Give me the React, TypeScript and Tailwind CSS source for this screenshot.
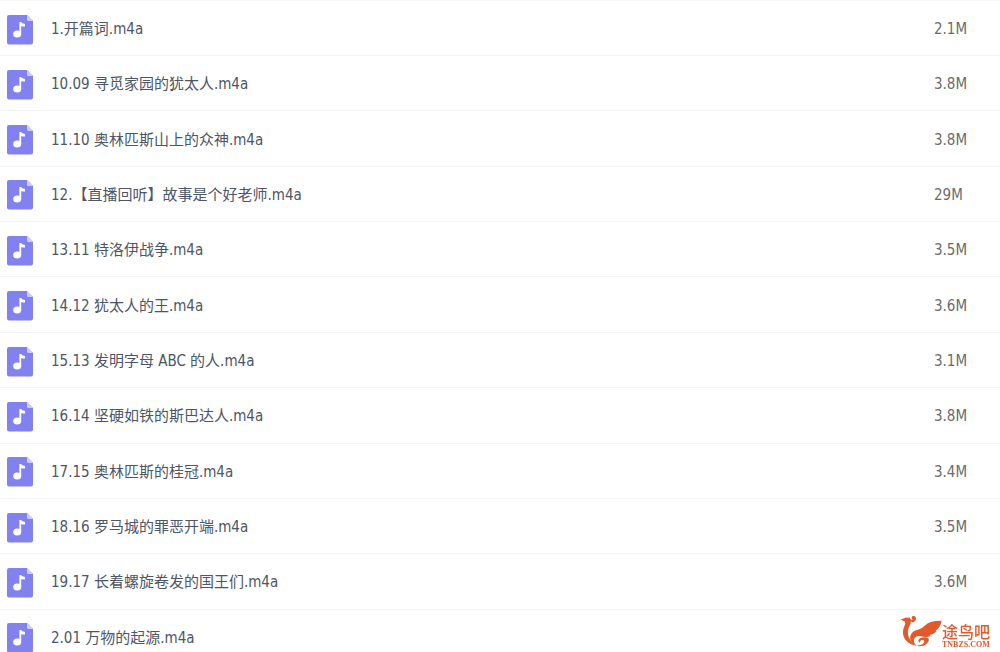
interface AudioFile {
  name: string;
  size?: string;
}

const files: AudioFile[] = [
  { name: "1.开篇词.m4a", size: "2.1M" },
  { name: "10.09 寻觅家园的犹太人.m4a", size: "3.8M" },
  { name: "11.10 奥林匹斯山上的众神.m4a", size: "3.8M" },
  { name: "12.【直播回听】故事是个好老师.m4a", size: "29M" },
  { name: "13.11 特洛伊战争.m4a", size: "3.5M" },
  { name: "14.12 犹太人的王.m4a", size: "3.6M" },
  { name: "15.13 发明字母 ABC 的人.m4a", size: "3.1M" },
  { name: "16.14 坚硬如铁的斯巴达人.m4a", size: "3.8M" },
  { name: "17.15 奥林匹斯的桂冠.m4a", size: "3.4M" },
  { name: "18.16 罗马城的罪恶开端.m4a", size: "3.5M" },
  { name: "19.17 长着螺旋卷发的国王们.m4a", size: "3.6M" },
  { name: "2.01 万物的起源.m4a" },
];

function AudioIcon() {
  return (
    <svg viewBox="0 0 26 30" className="block h-[30px] w-[26px]" aria-hidden="true">
      <path d="M2 0H20L26 6V27.500Q26 29.500 24 29.500H2Q0 29.500 0 27.500V2Q0 0 2 0Z" fill="#8181f0" />
      <path d="M20 0L26 6H21.5Q20 6 20 4.5Z" fill="#cfcefb" />
      <ellipse cx="10.2" cy="19" rx="4" ry="3.5" fill="#fff" />
      <path d="M12.400 7H14Q14.800 8.800 18 8.900V11.600Q15.500 11.700 14.200 11V19H12.400Z" fill="#fff" />
    </svg>
  );
}

function SiteLogo() {
  return (
    <div className="fixed right-[10px] bottom-0 flex items-center text-[#e2592b]">
      <svg viewBox="0 0 129 114" className="h-[38px] w-[43px]" fill="currentColor" aria-hidden="true">
        {/* head and body */}
        <path d="M5 15Q12 16 17 12Q25 8 31 13Q39 20 33 33Q24 49 28 65Q33 84 54 95Q31 94 18 76Q7 59 15 39Q22 25 16 22Q9 21 5 15Z" />
        {/* crest */}
        <path d="M31 9Q34 19 41 18Q35 9 42 5Q50 5 51 13Q50 24 41 25Q34 24 29 14Z" />
        {/* wing */}
        <path d="M128 20Q124 41 109 50L113 51Q105 62 91 63L95 66Q81 72 66 67Q53 64 47 72Q41 80 50 94Q30 84 34 66Q39 50 57 47Q68 45 77 35Q92 19 128 20Z" />
        {/* tail */}
        <path d="M50 94Q65 95 72 89Q81 79 69 78Q63 79 61 86Q54 78 63 73Q75 67 87 72Q94 79 83 89Q68 101 50 94Z" />
      </svg>
      <div className="flex flex-col pt-2">
        <span className="text-base leading-4 font-medium">途鸟吧</span>
        <span className="font-['Liberation_Serif',serif] text-[8px] leading-2 font-bold">TNBZS.COM</span>
      </div>
    </div>
  );
}

export default function App() {
  return (
    <main className="h-screen overflow-hidden border-t border-[#f7f8fa] bg-white font-['DejaVu_Sans_Condensed','Noto_Sans_CJK_SC',sans-serif]">
      <table className="h-[664px] w-full border-collapse text-left text-[15px] leading-5" aria-label="音频文件">
        <tbody>
          {files.map((file) => (
            <tr key={file.name} className="border-b border-[#f3f4f6]">
              <td className="w-[51px] pt-[3px] pl-[7px]">
                <AudioIcon />
              </td>
              <td className="pt-[2px] text-[#4d5666]">{file.name}</td>
              <td className="w-[66px] pt-[2px] text-[#6b6b6b]">{file.size}</td>
            </tr>
          ))}
        </tbody>
      </table>
      <SiteLogo />
    </main>
  );
}
